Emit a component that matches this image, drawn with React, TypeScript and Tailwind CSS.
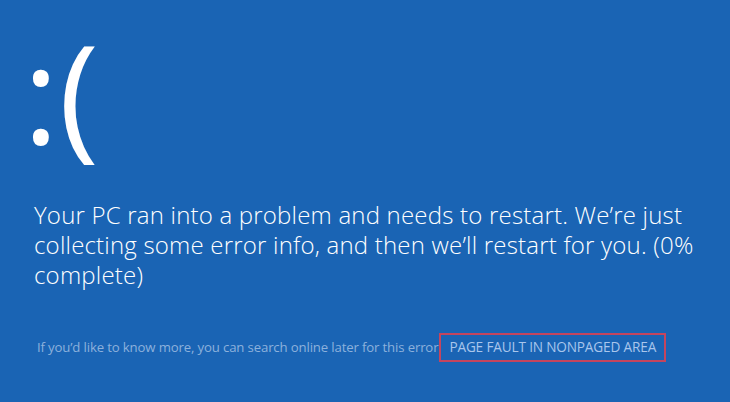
export default function App() {
  return (
    <div className="w-[730px] h-[402px] overflow-hidden bg-[#1a64b4] text-white font-['Open_Sans',sans-serif] flex flex-col">
      <div className="pl-[23px] pt-[12px] h-[170px] text-[136px] leading-[160px] font-normal">:(</div>
      <p className="pl-[34px] pt-[30px] pr-[20px] text-[24px] leading-[30px] font-light tracking-[0.2px]">
        Your PC ran into a problem and needs to restart. We’re just collecting some error info, and then we’ll restart for you. (0% complete)
      </p>
      <div className="pl-[37px] pt-[43px] flex items-center text-[13.2px] tracking-[-0.15px]">
        <span className="text-[#8cb1dc]">If you’d like to know more, you can search online later for this error</span>
        <span className="ml-[1px] border-[2px] border-[#c4455e] px-[8px] h-[29px] flex items-center text-[13.6px] tracking-[-0.15px] text-[#a9c6ec]">PAGE FAULT IN NONPAGED AREA</span>
      </div>
    </div>
  )
}
